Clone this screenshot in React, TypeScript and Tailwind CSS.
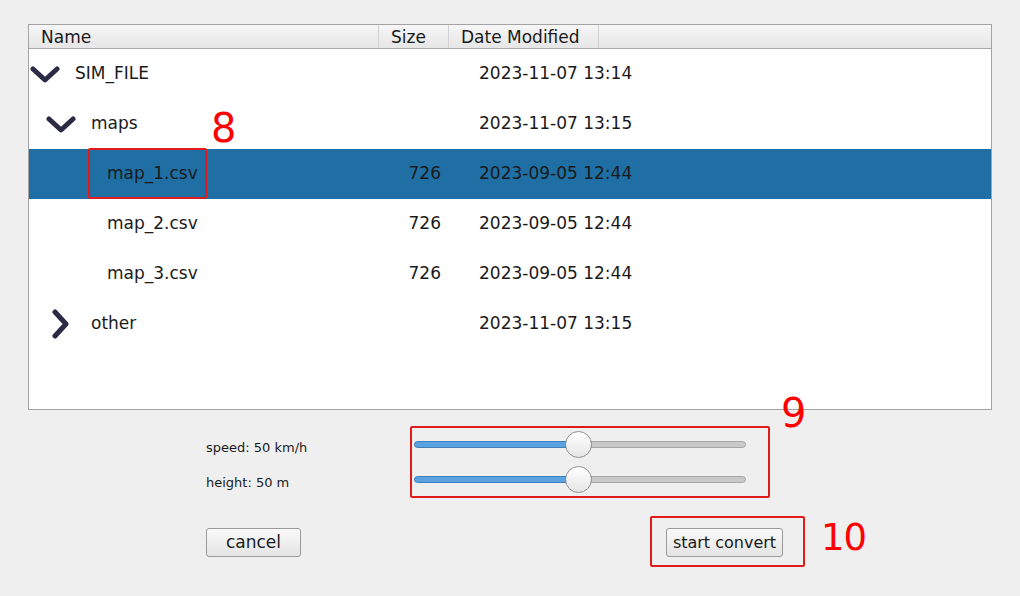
import React from "react";

const font = { fontFamily: '"DejaVu Sans", "Liberation Sans", sans-serif' };

function ChevronDown() {
  return (
    <svg width="30" height="18" viewBox="0 0 30 18" className="shrink-0">
      <path d="M3 3 L15 14 L27 3" fill="none" stroke="#2b2b45" strokeWidth="5" strokeLinecap="round" strokeLinejoin="round" />
    </svg>
  );
}

function ChevronRight() {
  return (
    <svg width="20" height="30" viewBox="0 0 20 30" className="shrink-0">
      <path d="M4 3 L15 15 L4 27" fill="none" stroke="#2b2b45" strokeWidth="5" strokeLinecap="round" strokeLinejoin="round" />
    </svg>
  );
}

type Row = {
  name: string;
  level: number;
  icon?: "down" | "right";
  size?: string;
  date: string;
  selected?: boolean;
};

const rows: Row[] = [
  { name: "SIM_FILE", level: 0, icon: "down", date: "2023-11-07 13:14" },
  { name: "maps", level: 1, icon: "down", date: "2023-11-07 13:15" },
  { name: "map_1.csv", level: 2, size: "726", date: "2023-09-05 12:44", selected: true },
  { name: "map_2.csv", level: 2, size: "726", date: "2023-09-05 12:44" },
  { name: "map_3.csv", level: 2, size: "726", date: "2023-09-05 12:44" },
  { name: "other", level: 1, icon: "right", date: "2023-11-07 13:15" },
];

function Slider() {
  return (
    <div className="relative w-[332px] h-[28px] flex items-center">
      <div className="flex w-full h-[7px]">
        <div className="w-[164px] h-full rounded-l-full bg-[#5aa3e0] border border-[#3d7fb8]" />
        <div className="flex-1 h-full rounded-r-full bg-[#c9c9c9] border border-[#a5a5a5]" />
      </div>
      <div className="absolute left-[151px] top-[1px] w-[27px] h-[27px] rounded-full border border-[#8f8f8f] bg-gradient-to-b from-white to-[#e6e6e6]" />
    </div>
  );
}

export default function App() {
  return (
    <div className="relative w-[1020px] h-[596px] bg-[#efefef] text-[#1a1a1a] overflow-hidden" style={font}>
      <div className="pt-[24px] pl-[28px] pr-[28px]">
        <div className="h-[386px] border border-[#a3a3a3] bg-white flex flex-col">
          <div className="flex h-[24px] text-[17px] leading-[24px] border-b border-[#a8a8a8] bg-gradient-to-b from-[#f6f6f6] to-[#e6e6e6]">
            <div className="w-[350px] pl-[12px] border-r border-[#d2d2d2]">Name</div>
            <div className="w-[70px] pl-[12px] border-r border-[#d2d2d2]">Size</div>
            <div className="w-[150px] pl-[12px] border-r border-[#d2d2d2]">Date Modified</div>
            <div className="flex-1" />
          </div>
          {rows.map((r) => (
            <div
              key={r.name}
              className={
                "flex h-[50px] items-center text-[17px] " + (r.selected ? "bg-[#1f6fa5]" : "")
              }
            >
              <div className="w-[350px] flex items-center" style={{ paddingLeft: r.level * 16 }}>
                <div className="w-[46px] flex items-center">
                  {r.icon === "down" && <div className="pl-[1px] pt-[2px]"><ChevronDown /></div>}
                  {r.icon === "right" && <div className="pl-[6px]"><ChevronRight /></div>}
                </div>
                <span>{r.name}</span>
              </div>
              <div className="w-[70px] text-right pr-[8px]">{r.size}</div>
              <div className="pl-[30px]">{r.date}</div>
            </div>
          ))}
        </div>
      </div>

      <div className="flex flex-col gap-[7px] mt-[20px] pl-[206px]">
        <div className="flex items-center h-[28px]">
          <div className="w-[208px] text-[13px] pt-[8px]">speed: 50 km/h</div>
          <Slider />
        </div>
        <div className="flex items-center h-[28px]">
          <div className="w-[208px] text-[13px] pt-[8px]">height: 50 m</div>
          <Slider />
        </div>
      </div>

      <div className="flex mt-[35px] pl-[206px]">
        <button className="w-[95px] h-[29px] rounded-[3px] border border-[#9a9a9a] bg-gradient-to-b from-[#fafafa] to-[#e4e4e4] text-[17px] leading-none">
          cancel
        </button>
        <button className="ml-[365px] w-[117px] h-[29px] rounded-[3px] border border-[#9a9a9a] bg-gradient-to-b from-[#fafafa] to-[#e4e4e4] text-[16px] leading-none">
          start convert
        </button>
      </div>

      {/* annotations */}
      <div className="absolute left-[88px] top-[148px] w-[119px] h-[51px] border-2 border-[#e01b1b] rounded-[2px]" />
      <div className="absolute left-[211px] top-[108px] text-[40px] leading-none text-[#ff0000]">8</div>
      <div className="absolute left-[410px] top-[426px] w-[360px] h-[72px] border-2 border-[#e01b1b] rounded-[2px]" />
      <div className="absolute left-[781px] top-[393px] text-[40px] leading-none text-[#ff0000]">9</div>
      <div className="absolute left-[650px] top-[516px] w-[155px] h-[51px] border-2 border-[#e01b1b] rounded-[2px]" />
      <div className="absolute left-[821px] top-[519px] text-[37px] leading-none tracking-[-1px] text-[#ff0000]">10</div>
    </div>
  );
}
